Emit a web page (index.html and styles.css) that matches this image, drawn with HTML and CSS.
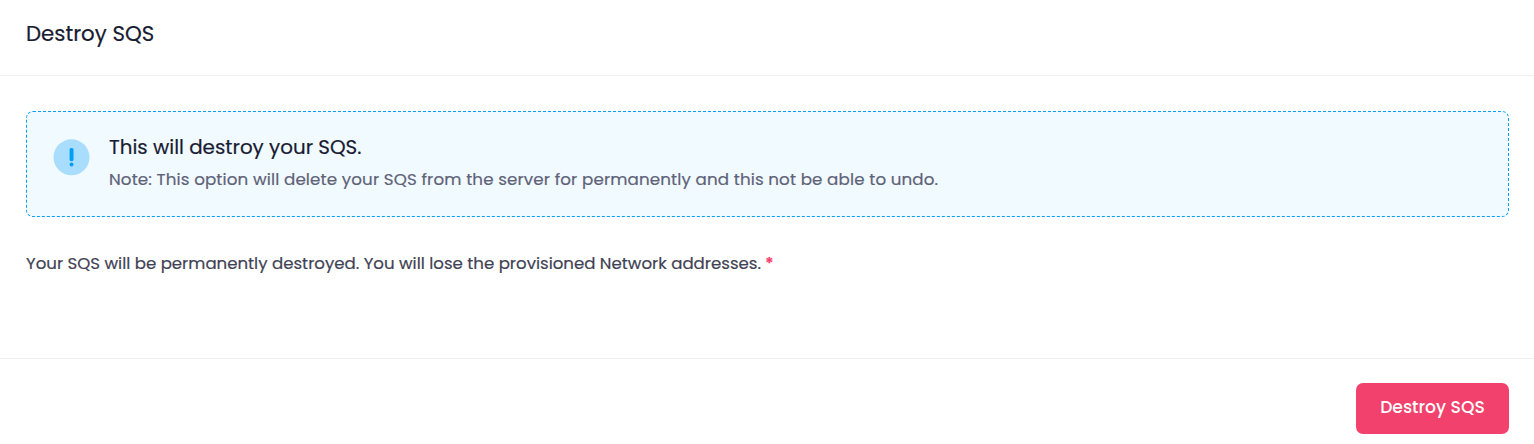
FILE: index.html
```html
<!DOCTYPE html>
<html lang="en">
<head>
<meta charset="utf-8">
<title>Destroy SQS</title>
<link rel="stylesheet" href="styles.css">
</head>
<body>
<section class="card">
  <header class="card-header"><h3 class="card-title"><span>Destroy SQS</span></h3></header>
  <div class="card-body">
    <div class="notice">
      <svg class="notice-icon" viewBox="0 0 36 36" aria-hidden="true">
        <circle cx="17.5" cy="18.3" r="18" fill="#a8ddfd"/>
        <rect x="15.6" y="9" width="3.9" height="13.2" rx="1.6" fill="#009ef7"/>
        <rect x="15.6" y="23.5" width="3.9" height="3.9" rx="1.95" fill="#009ef7"/>
      </svg>
      <div class="notice-text">
        <h4 class="notice-title"><span>This will destroy your SQS.</span></h4>
        <p class="notice-note"><span>Note: This option will delete your SQS from the server for permanently and this not be able to undo.</span></p>
      </div>
    </div>
    <p class="confirm"><span class="confirm-text">Your SQS will be permanently destroyed. You will lose the provisioned Network addresses.</span><span class="required">*</span></p>
  </div>
  <footer class="card-footer"><button class="btn" type="button"><span>Destroy SQS</span></button></footer>
</section>
</body>
</html>
```
FILE: styles.css
```css
* { box-sizing: border-box; }
body { margin: 0; background: #fff; color: #181c32; font-family: Poppins, "Open Sans", sans-serif; }
h3, h4, p { margin: 0; font-weight: 400; white-space: nowrap; -webkit-text-stroke: .2px currentColor; }
.card { height: 444px; display: flex; flex-direction: column; overflow: hidden; }
.card-header { height: 76px; padding: 18px 26px 0; border-bottom: 1px solid #eff2f5; }
.card-title { font-size: 21.3px; line-height: 32px; }
.card-body { height: 282px; padding: 35px 25px 0 26px; }
.notice { height: 106px; display: flex; padding: 27px 26px; border: 1px dashed #009ef7; border-radius: 7px; background: #f1faff; }
.notice-icon { width: 36px; height: 36px; margin: 0 19px 0 1px; flex: none; overflow: visible; }
.notice-text { margin-top: -6px; }
.notice-title { font-size: 19.85px; line-height: 28px; }
.notice-note { margin-top: 4px; font-size: 16.7px; letter-spacing: .12px; line-height: 28px; color: #5e6278; }
.confirm { display: flex; gap: 4px; margin-top: 35px; font-size: 16.58px; line-height: 24px; color: #3f4254; }
.required { color: #f1416c; font-weight: 600; }
.card-footer { height: 86px; padding: 24px 25px 0; border-top: 1px solid #eff2f5; display: flex; justify-content: flex-end; }
.btn { width: 153px; height: 51px; padding: 0 0 3px; border: 0; border-radius: 7px; background: #f1416c; color: #fff; font: 500 17.2px Poppins, "Open Sans", sans-serif; white-space: nowrap; }
```
